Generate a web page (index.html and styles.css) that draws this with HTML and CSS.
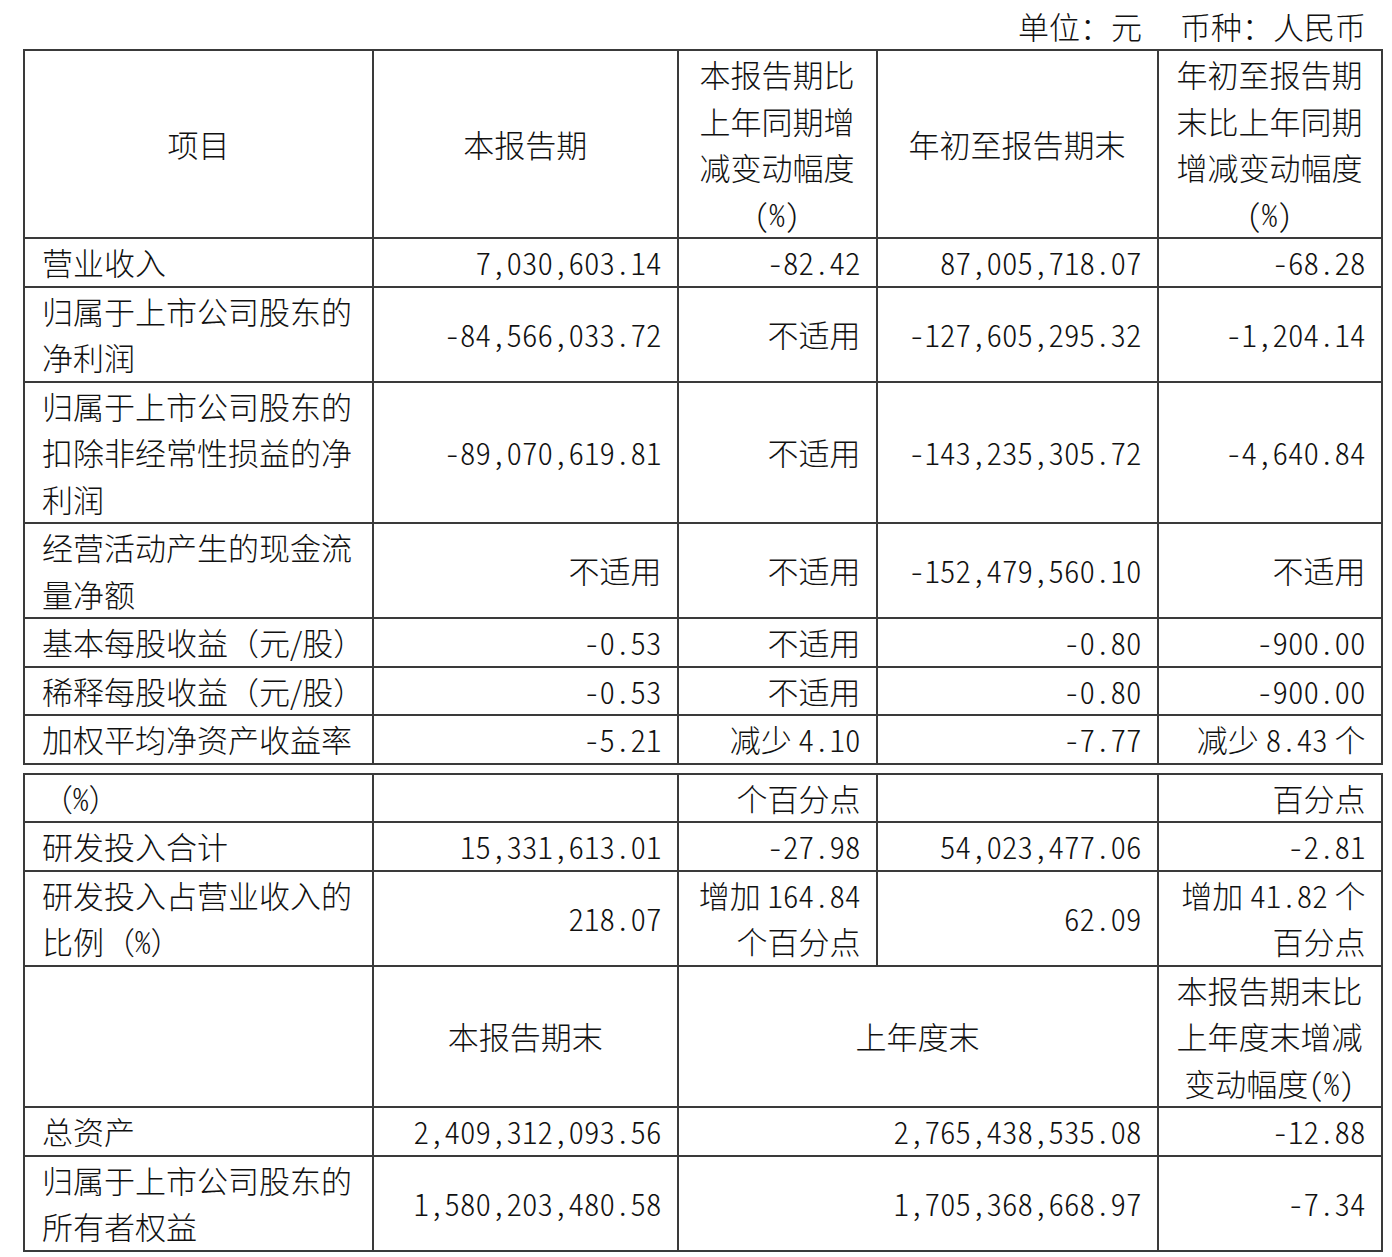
FILE: index.html
```html
<!DOCTYPE html>
<html lang="zh-CN">
<head>
<meta charset="utf-8">
<title>主要财务数据</title>
<link rel="stylesheet" href="styles.css">
</head>
<body>
<div class="page">
  <div class="unit">单位：元<span class="gap"></span>币种：人民币</div>
  <table class="fin">
    <colgroup>
      <col class="w1"><col class="w2"><col class="w3"><col class="w4"><col class="w5">
    </colgroup>
    <tr>
      <td class="c">项目</td>
      <td class="c">本报告期</td>
      <td class="c">本报告期比<br>上年同期增<br>减变动幅度<br><span class="n">(%)</span></td>
      <td class="c">年初至报告期末</td>
      <td class="c">年初至报告期<br>末比上年同期<br>增减变动幅度<br><span class="n">(%)</span></td>
    </tr>
    <tr>
      <td>营业收入</td>
      <td class="r"><span class="n">7,030,603.14</span></td>
      <td class="r"><span class="n">-82.42</span></td>
      <td class="r"><span class="n">87,005,718.07</span></td>
      <td class="r"><span class="n">-68.28</span></td>
    </tr>
    <tr>
      <td>归属于上市公司股东的<br>净利润</td>
      <td class="r"><span class="n">-84,566,033.72</span></td>
      <td class="r">不适用</td>
      <td class="r"><span class="n">-127,605,295.32</span></td>
      <td class="r"><span class="n">-1,204.14</span></td>
    </tr>
    <tr>
      <td>归属于上市公司股东的<br>扣除非经常性损益的净<br>利润</td>
      <td class="r"><span class="n">-89,070,619.81</span></td>
      <td class="r">不适用</td>
      <td class="r"><span class="n">-143,235,305.72</span></td>
      <td class="r"><span class="n">-4,640.84</span></td>
    </tr>
    <tr>
      <td>经营活动产生的现金流<br>量净额</td>
      <td class="r">不适用</td>
      <td class="r">不适用</td>
      <td class="r"><span class="n">-152,479,560.10</span></td>
      <td class="r">不适用</td>
    </tr>
    <tr>
      <td>基本每股收益（元/股）</td>
      <td class="r"><span class="n">-0.53</span></td>
      <td class="r">不适用</td>
      <td class="r"><span class="n">-0.80</span></td>
      <td class="r"><span class="n">-900.00</span></td>
    </tr>
    <tr>
      <td>稀释每股收益（元/股）</td>
      <td class="r"><span class="n">-0.53</span></td>
      <td class="r">不适用</td>
      <td class="r"><span class="n">-0.80</span></td>
      <td class="r"><span class="n">-900.00</span></td>
    </tr>
    <tr>
      <td>加权平均净资产收益率</td>
      <td class="r"><span class="n">-5.21</span></td>
      <td class="r">减少 <span class="n">4.10</span></td>
      <td class="r"><span class="n">-7.77</span></td>
      <td class="r">减少 <span class="n">8.43</span> 个</td>
    </tr>
  </table>
  <table class="fin second">
    <colgroup>
      <col class="w1"><col class="w2"><col class="w3"><col class="w4"><col class="w5">
    </colgroup>
    <tr>
      <td>（<span class="n">%</span>）</td>
      <td class="r"></td>
      <td class="r">个百分点</td>
      <td class="r"></td>
      <td class="r">百分点</td>
    </tr>
    <tr>
      <td>研发投入合计</td>
      <td class="r"><span class="n">15,331,613.01</span></td>
      <td class="r"><span class="n">-27.98</span></td>
      <td class="r"><span class="n">54,023,477.06</span></td>
      <td class="r"><span class="n">-2.81</span></td>
    </tr>
    <tr>
      <td>研发投入占营业收入的<br>比例（<span class="n">%</span>）</td>
      <td class="r"><span class="n">218.07</span></td>
      <td class="r">增加 <span class="n">164.84</span><br>个百分点</td>
      <td class="r"><span class="n">62.09</span></td>
      <td class="r">增加 <span class="n">41.82</span> 个<br>百分点</td>
    </tr>
    <tr>
      <td></td>
      <td class="c">本报告期末</td>
      <td class="c" colspan="2">上年度末</td>
      <td class="c">本报告期末比<br>上年度末增减<br>变动幅度<span class="n">(%)</span></td>
    </tr>
    <tr>
      <td>总资产</td>
      <td class="r"><span class="n">2,409,312,093.56</span></td>
      <td class="r" colspan="2"><span class="n">2,765,438,535.08</span></td>
      <td class="r"><span class="n">-12.88</span></td>
    </tr>
    <tr>
      <td>归属于上市公司股东的<br>所有者权益</td>
      <td class="r"><span class="n">1,580,203,480.58</span></td>
      <td class="r" colspan="2"><span class="n">1,705,368,668.97</span></td>
      <td class="r"><span class="n">-7.34</span></td>
    </tr>
  </table>
</div>
</body>
</html>
```
FILE: styles.css
```css
html, body {
  margin: 0;
  padding: 0;
  background: #ffffff;
}

body {
  font-family: "Noto Sans CJK SC", "Noto Sans CJK JP", sans-serif;
  font-weight: 300;
  font-size: 31px;
  color: #111111;
}

.n {
  font-feature-settings: "hwid" 1;
}

.page {
  width: 1360px;
  margin-left: 23px;
  padding-top: 2px;
}

.unit {
  height: 47px;
  line-height: 47px;
  text-align: right;
  padding-right: 17px;
  white-space: nowrap;
}

.unit .gap {
  display: inline-block;
  width: 38px;
}

.fin {
  border-collapse: collapse;
  table-layout: fixed;
  width: 1359px;
}

.fin.second {
  margin-top: 8px;
}

.w1 { width: 349px; }
.w2 { width: 304.5px; }
.w3 { width: 199px; }
.w4 { width: 281px; }
.w5 { width: 224px; }

.fin td {
  border: 2px solid #3a3a3a;
  padding: 0 15px 0 17px;
  line-height: 46.5px;
  white-space: nowrap;
  vertical-align: middle;
  overflow: visible;
}

.fin td.r {
  text-align: right;
}

.fin td.c {
  text-align: center;
  padding: 0 8px;
}
```
